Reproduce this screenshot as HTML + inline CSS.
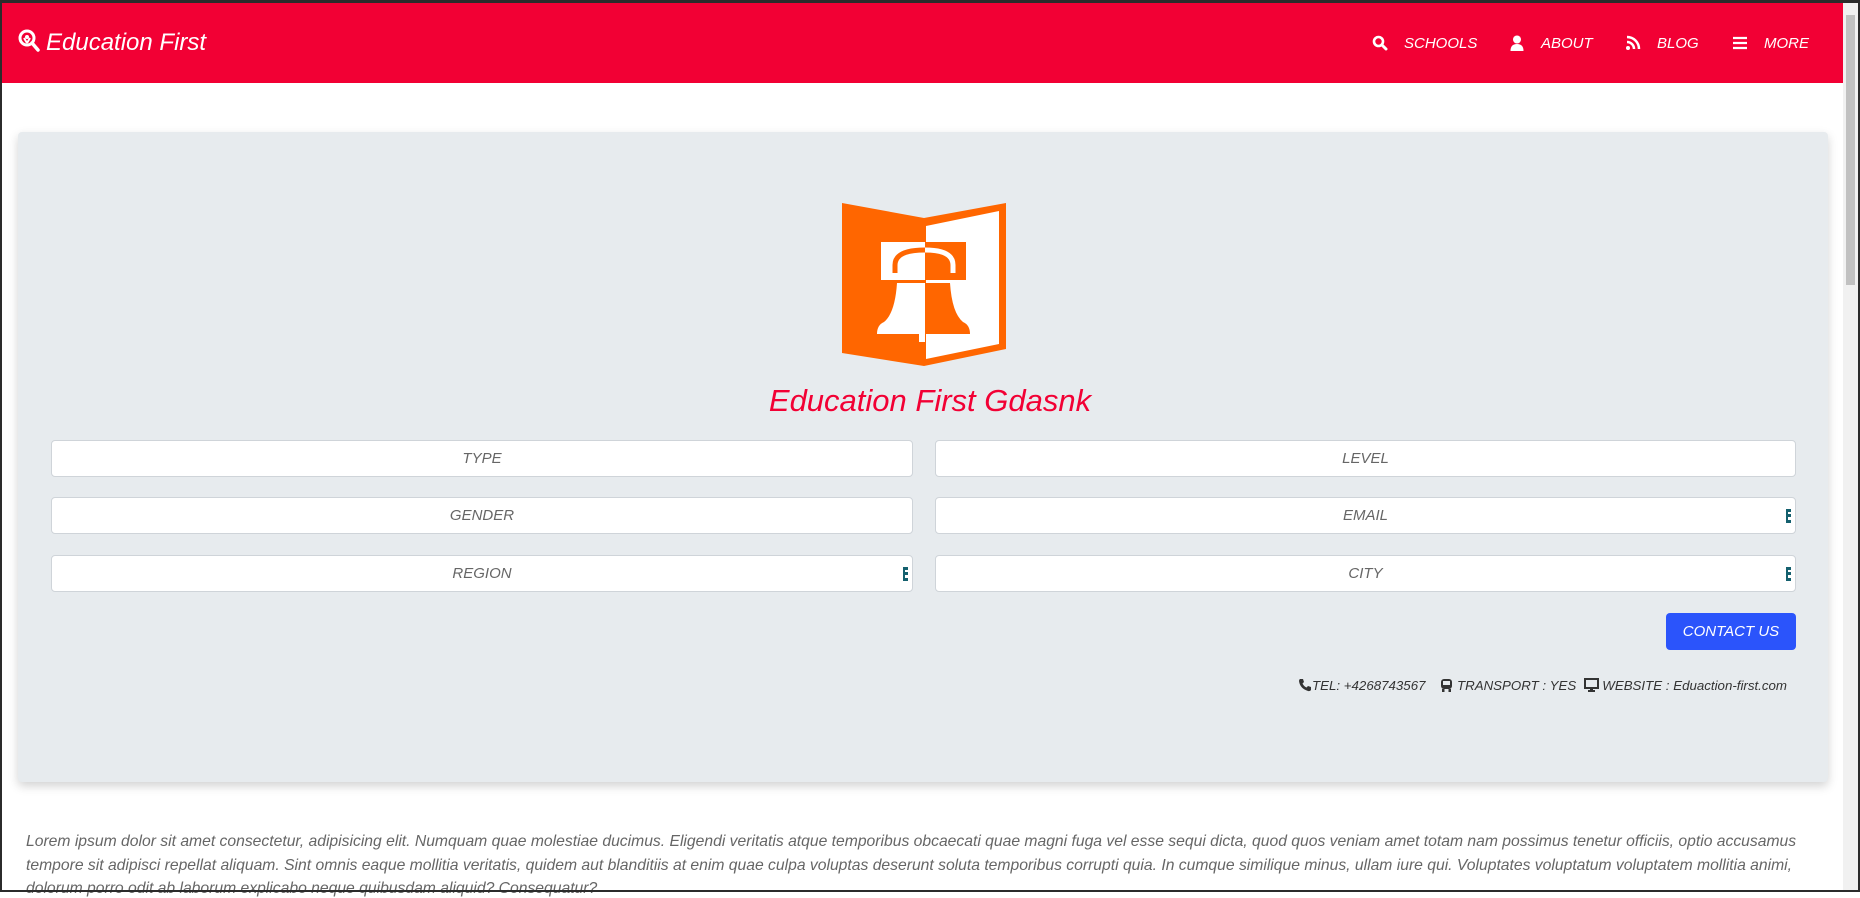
<!DOCTYPE html>
<html><head><meta charset="utf-8"><style>
*{margin:0;padding:0;box-sizing:border-box}
html,body{width:1860px;height:892px;overflow:hidden;background:#fff;font-family:"Liberation Sans",sans-serif}
.frame{position:absolute;inset:0;border:2px solid #2b2b2b;border-top-width:3px;pointer-events:none;z-index:10}
.sb{position:absolute;right:2px;top:3px;width:15px;bottom:2px;background:#f1f1f1}
.sb i{position:absolute;left:3px;right:3px;top:12px;height:270px;background:#c1c1c1}
.hdr{position:absolute;left:0;top:3px;width:1843px;height:80px;background:#f20034}
.brand{position:absolute;left:18px;top:26px;color:#fff;font-style:italic;font-size:24px}
.brand svg{vertical-align:-3px;margin-right:6px}
.nav{position:absolute;top:32px;color:#fff;font-style:italic;font-size:15px}
.nav svg{position:absolute;left:-32px;top:0px}
.card{position:absolute;left:18px;top:132px;width:1810px;height:650px;background:#e7ebee;border-radius:4px;box-shadow:0 4px 10px rgba(0,0,0,.18)}
.title{position:absolute;left:0;width:100%;top:383px;text-align:center;color:#f20034;font-style:italic;font-size:31px}
.in{position:absolute;height:37px;background:#fff;border:1px solid #cfd4d9;border-radius:4px;color:#666;font-style:italic;font-size:15px;text-align:center;line-height:35px}
.in b{position:absolute;right:4px;top:11px;width:5px;height:14px;border-left:2px solid #14606e;border-right:3px dotted #14606e}
.btn{position:absolute;left:1666px;top:613px;width:130px;height:37px;background:#2b54fb;border-radius:4px;color:#fff;font-style:italic;font-size:15px;text-align:center;line-height:37px}
.info{position:absolute;left:1298px;top:678px;font-size:13.3px;font-style:italic;color:#333;white-space:nowrap}
.info svg{vertical-align:-2px}
.p{position:absolute;left:26px;color:#666;font-style:italic;font-size:15.7px;white-space:nowrap}
</style></head><body>
<div class="hdr">
 <div class="brand"><svg width="22" height="24" viewBox="0 0 22 24"><circle cx="9" cy="9" r="7" fill="none" stroke="#fff" stroke-width="3"/><circle cx="9" cy="8" r="2" fill="#fff"/><path d="M9 14 L6 9 M9 14 L12 9" stroke="#fff" stroke-width="2"/><path d="M14 14 L20 21" stroke="#fff" stroke-width="3.5" stroke-linecap="round"/></svg>Education First</div>
 <div class="nav" style="left:1404px"><svg width="16" height="16" viewBox="0 0 16 16"><circle cx="6.5" cy="6.5" r="4.5" fill="none" stroke="#fff" stroke-width="2.6"/><path d="M10 10 L14 14" stroke="#fff" stroke-width="3" stroke-linecap="round"/></svg>SCHOOLS</div>
 <div class="nav" style="left:1541px"><svg width="16" height="16" viewBox="0 0 16 16"><circle cx="8" cy="4.5" r="4" fill="#fff"/><path d="M1.5 16 Q1.5 9 8 9 Q14.5 9 14.5 16 Z" fill="#fff"/></svg>ABOUT</div>
 <div class="nav" style="left:1657px"><svg width="16" height="16" viewBox="0 0 16 16"><circle cx="3" cy="13" r="2" fill="#fff"/><path d="M2 7 A7 7 0 0 1 9 14 M2 2 A12 12 0 0 1 14 14" fill="none" stroke="#fff" stroke-width="2.5"/></svg>BLOG</div>
 <div class="nav" style="left:1764px"><svg width="16" height="16" viewBox="0 0 16 16"><path d="M1 3H15M1 8H15M1 13H15" stroke="#fff" stroke-width="2.2"/></svg>MORE</div>
</div>
<div class="card"></div>
<svg style="position:absolute;left:842px;top:203px" width="164" height="163" viewBox="0 0 164 163">
 <polygon points="0,0 82,15 82,163 0,150" fill="#ff6600"/>
 <polygon points="82,15 164,0 164,146 82,163" fill="#ff6600"/>
 <polygon points="84,23 157,8 157,141 84,156" fill="#fff"/>
 <rect x="39" y="39" width="44" height="38" fill="#fff"/>
 <rect x="83" y="39" width="41" height="38" fill="#ff6600"/>
 <path d="M53 70 V62 Q53 47 83 47" fill="none" stroke="#ff6600" stroke-width="5"/>
 <path d="M83 47 Q111 47 111 62 V70" fill="none" stroke="#fff" stroke-width="5"/>
 <path d="M83 80 L55 80 Q53 110 42 119 Q35 122 35 131 L83 131 Z" fill="#fff"/>
 <path d="M83 80 L108 80 Q110 110 121 119 Q128 122 128 131 L83 131 Z" fill="#ff6600"/>
 <rect x="77" y="131" width="6" height="8" fill="#fff"/>
</svg>
<div class="title">Education First Gdasnk</div>
<div class="in" style="left:51px;top:440px;width:862px">TYPE</div>
<div class="in" style="left:935px;top:440px;width:861px">LEVEL</div>
<div class="in" style="left:51px;top:497px;width:862px">GENDER</div>
<div class="in" style="left:935px;top:497px;width:861px">EMAIL<b></b></div>
<div class="in" style="left:51px;top:555px;width:862px">REGION<b></b></div>
<div class="in" style="left:935px;top:555px;width:861px">CITY<b></b></div>
<div class="btn">CONTACT US</div>
<div class="info"><svg width="14" height="14" viewBox="0 0 14 14"><path d="M2 1 L5 1 L6 4 L4.5 5.5 Q6 8.5 8.5 9.5 L10 8 L13 9 L13 12 Q12 13.5 10 13 Q2 10.5 1 3 Q1 1.5 2 1Z" fill="#333"/></svg>TEL: +4268743567 &nbsp;&nbsp; <svg width="13" height="14" viewBox="0 0 13 14"><rect x="1" y="1" width="11" height="10" rx="3" fill="#333"/><rect x="3" y="3" width="7" height="4" fill="#e7ebee"/><rect x="2" y="11" width="2.5" height="3" fill="#333"/><rect x="8.5" y="11" width="2.5" height="3" fill="#333"/></svg> TRANSPORT : YES &nbsp;<svg width="15" height="14" viewBox="0 0 15 14"><rect x="1" y="1" width="13" height="9" fill="none" stroke="#333" stroke-width="2"/><rect x="6" y="10" width="3" height="2" fill="#333"/><rect x="4" y="12" width="7" height="2" fill="#333"/></svg> WEBSITE : Eduaction-first.com</div>
<div class="p" style="top:833px">Lorem ipsum dolor sit amet consectetur, adipisicing elit. Numquam quae molestiae ducimus. Eligendi veritatis atque temporibus obcaecati quae magni fuga vel esse sequi dicta, quod quos veniam amet totam nam possimus tenetur officiis, optio accusamus</div>
<div class="p" style="top:857px">tempore sit adipisci repellat aliquam. Sint omnis eaque mollitia veritatis, quidem aut blanditiis at enim quae culpa voluptas deserunt soluta temporibus corrupti quia. In cumque similique minus, ullam iure qui. Voluptates voluptatum voluptatem mollitia animi,</div>
<div class="p" style="top:880px">dolorum porro odit ab laborum explicabo neque quibusdam aliquid? Consequatur?</div>
<div class="sb"><i></i></div>
<div class="frame"></div>
</body></html>
